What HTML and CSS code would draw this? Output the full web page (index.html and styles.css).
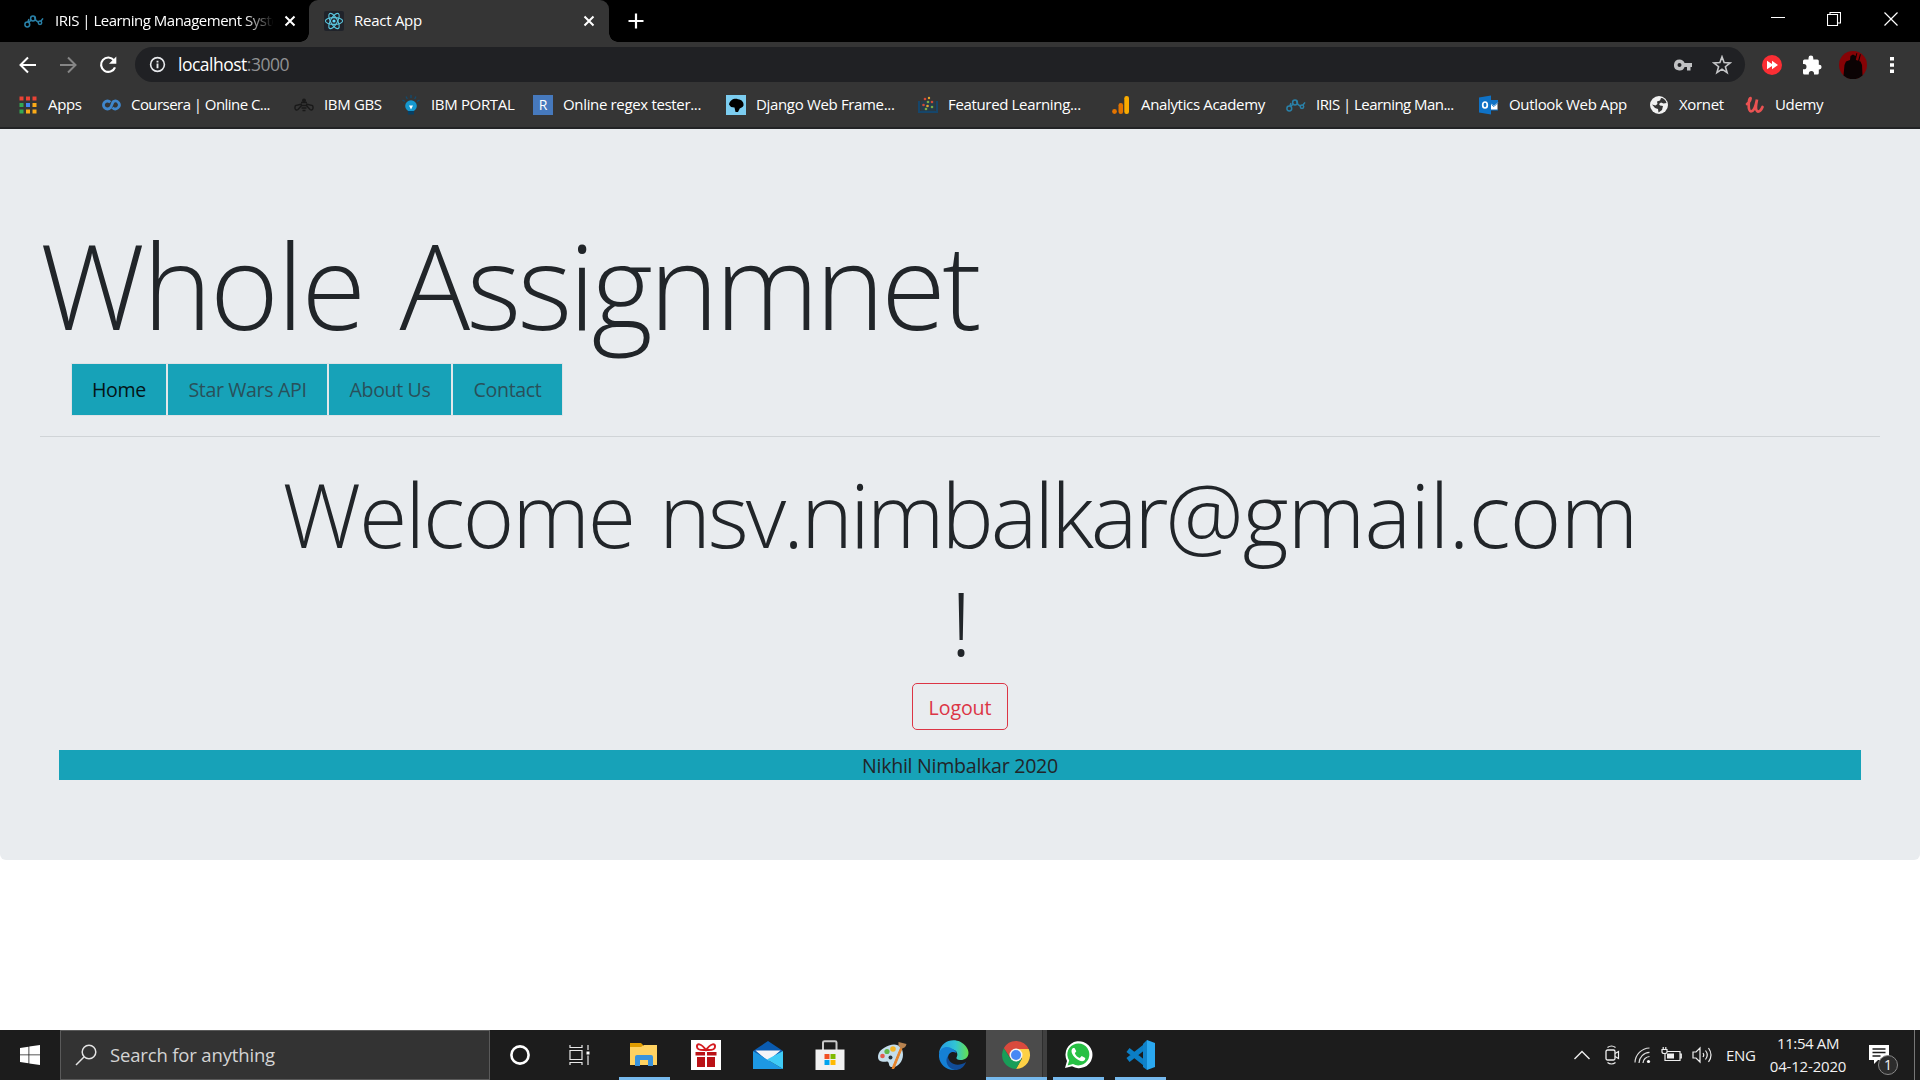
FILE: index.html
```html
<!DOCTYPE html>
<html lang="en">
<head>
<meta charset="utf-8">
<title>React App</title>
<link rel="stylesheet" href="styles.css">
</head>
<body>
<svg class="defs" width="0" height="0">
  <symbol id="iris" viewBox="0 0 20 20"><g fill="none" stroke="#2a81a8" stroke-width="1.5"><circle cx="3.3" cy="13.5" r="2.4"/><circle cx="9" cy="7.5" r="2.4"/><circle cx="16" cy="11.8" r="1.7"/><path d="M4.3 11.3 7.4 9.2M11 8.8l3.4 2.4M16.8 10.2l2.2-2.8M3.8 11l1.2-3M10.4 6l1.8 4"/></g></symbol>
  <symbol id="close" viewBox="0 0 12 12"><path d="M1.5 1.5l9 9m0-9l-9 9" fill="none" stroke="#fff" stroke-width="2"/></symbol>
</svg>

<header class="browser">
  <div class="tabstrip">
    <div class="tab tab-idle">
      <svg class="favicon" viewBox="0 0 20 20"><use href="#iris"/></svg>
      <span class="tab-title">IRIS | Learning Management Syste</span>
      <svg class="tab-close"><use href="#close"/></svg>
    </div>
    <div class="tab tab-active">
      <svg class="favicon" viewBox="0 0 20 20"><rect width="20" height="20" rx="2" fill="#20232a"/><g fill="none" stroke="#5bc6de" stroke-width="1.1"><ellipse cx="10" cy="10" rx="8.6" ry="3.4"/><ellipse cx="10" cy="10" rx="8.6" ry="3.4" transform="rotate(60 10 10)"/><ellipse cx="10" cy="10" rx="8.6" ry="3.4" transform="rotate(120 10 10)"/></g><circle cx="10" cy="10" r="1.6" fill="#61dafb"/></svg>
      <span class="tab-title">React App</span>
      <svg class="tab-close"><use href="#close"/></svg>
    </div>
    <svg class="new-tab" viewBox="0 0 16 16"><path d="M8 .5v15M.5 8h15" stroke="#fff" stroke-width="2.2"/></svg>
    <div class="window-controls">
      <svg viewBox="0 0 14 14"><path d="M0 5.500h14" stroke="#fff"/></svg>
      <svg viewBox="0 0 14 14"><path d="M.5 2.500h10v11H.5zM3 2.500V.5h10.500v10.500H11" fill="none" stroke="#fff" stroke-width="1.1"/></svg>
      <svg viewBox="0 0 14 14"><path d="M.5.5l13 13m0-13l-13 13" stroke="#fff" stroke-width="1.2"/></svg>
    </div>
  </div>

  <div class="toolbar">
    <svg class="nav-icon" viewBox="0 0 20 20"><path d="M18 10H3M10 2.500 2.500 10l7.500 7.500" fill="none" stroke="#fff" stroke-width="2"/></svg>
    <svg class="nav-icon" viewBox="0 0 20 20"><path d="M2 10h15M10 2.500l7.500 7.500-7.500 7.500" fill="none" stroke="#868686" stroke-width="2"/></svg>
    <svg class="nav-icon" viewBox="0 0 20 20"><path d="M16 5.300A7.200 7.200 0 1 0 17 12.300" fill="none" stroke="#fff" stroke-width="2.200"/><path d="M18.300 1.500v7.300H11z" fill="#fff"/></svg>
    <div class="address">
      <svg class="info" viewBox="0 0 18 18"><circle cx="9" cy="9" r="7.300" fill="none" stroke="#e8eaed" stroke-width="1.700"/><path d="M8 8h2v5H8zM8 5h2v2H8z" fill="#e8eaed"/></svg>
      <span class="url">localhost<span class="port">:3000</span></span>
      <svg class="key" viewBox="0 0 18 12"><path fill-rule="evenodd" fill="#c0c1c3" d="M5.500.500a5.500 5.500 0 1 0 5.100 7.500H13v3.500h3.500V8H18V4H10.600A5.500 5.500 0 0 0 5.500.500zm0 3.500a2 2 0 1 1 0 4 2 2 0 0 1 0-4z"/></svg>
      <svg class="star" viewBox="0 0 20 20"><path d="M10 1.800l2.100 5.800 6 .300-4.700 3.800 1.700 5.900-5.100-3.400-5.100 3.400 1.700-5.900L1.900 7.900l6-.300z" fill="none" stroke="#c6c7c9" stroke-width="1.600"/></svg>
    </div>
    <svg class="ext" viewBox="0 0 20 20"><circle cx="10" cy="10" r="10" fill="#fb2e34"/><path d="M5 5.800 10 9V5.800L16 10l-6 4.200V11l-5 3.200z" fill="#fff"/></svg>
    <svg class="ext" viewBox="0 0 20 20"><path fill="#fff" d="M1 6a1.500 1.500 0 0 1 1.500-1.500H6.500V3a2.400 2.400 0 0 1 4.800 0v1.500h4A1.500 1.500 0 0 1 16.800 6v3.700h.400a2.400 2.400 0 0 1 0 4.800h-.400v3.500a1.500 1.500 0 0 1-1.500 1.500H12v-.900a2.600 2.600 0 0 0-5.200 0v.900H2.500A1.500 1.500 0 0 1 1 18v-3.700h.900a2.600 2.600 0 0 0 0-5.200H1z"/></svg>
    <svg class="avatar" viewBox="0 0 28 28"><circle cx="14" cy="14" r="14" fill="#860306"/><path d="M4.500 24.500 5.500 14 7 10.500 11 9l.500-4L14 3.500 16.500 5l.500 4 4.500 1.500L23 14l.500 10.500A14 14 0 0 1 4.500 24.500zM16 7l1.500-5 .800.300L17 8zM19 10l2-7 .800.400L20 11z" fill="#0b0304"/></svg>
    <svg class="dots" viewBox="0 0 4 18"><path d="M0 1h4v3.500H0zM0 7.200h4v3.500H0zM0 13.400h4v3.500H0z" fill="#fff"/></svg>
  </div>

  <nav class="bookmarks">
    <span class="bm"><svg viewBox="0 0 20 20"><path fill="#ea4335" d="M1.500 1.500h4v4h-4zM8 1.500h4v4H8zM14.500 1.500h4v4h-4z"/><path fill="#34a853" d="M1.500 8h4v4h-4zM1.500 14.500h4v4h-4z"/><path fill="#4285f4" d="M8 8h4v4H8z"/><path fill="#fbab18" d="M14.500 8h4v4h-4zM8 14.500h4v4H8zM14.500 14.500h4v4h-4z"/></svg><span>Apps</span></span>
    <span class="bm bm-tight"><svg viewBox="0 0 20 20"><path d="M9.300 7.200A4 4 0 1 0 9.300 12.800C11 11.500 11 7.500 12.500 6.500A3.900 3.900 0 1 1 11.500 12.600" fill="none" stroke="#3f86cc" stroke-width="2.800"/></svg><span>Coursera | Online C...</span></span>
    <span class="bm"><svg viewBox="0 0 20 20"><g fill="none" stroke="#191919" stroke-width="1.400"><path d="M8 9 1.500 10.500C0 14 2 16 4 14.500L8 10M12 9l6.500 1.500c1.500 3.500-.500 5.500-2.500 4L12 10"/><path d="M7 7.500h6M7.500 10.500h5M7.500 13h5M8.500 15.500h3" stroke-width="1.700"/></g><circle cx="10" cy="5.500" r="2" fill="#191919"/></svg><span>IBM GBS</span></span>
    <span class="bm"><svg viewBox="0 0 20 20"><circle cx="10" cy="11" r="5.800" fill="#1598cf"/><path d="M7 16h6v3.500H7z" fill="#083f63"/><path d="M8 10.500h4l-2 4z" fill="#fff"/><path d="M10 0v3M5 1.500l1.300 2.500M15 1.500l-1.300 2.500M1.500 5l2.500 1.500M18.500 5 16 6.500" stroke="#114c70" stroke-width="1.300"/></svg><span>IBM PORTAL</span></span>
    <span class="bm"><svg viewBox="0 0 20 20"><path fill="#4679bd" d="M0 0h20v20H0z"/><text x="10" y="15.200" text-anchor="middle" class="glyph">R</text></svg><span>Online regex tester...</span></span>
    <span class="bm"><svg viewBox="0 0 20 20"><path fill="#7ccdf0" d="M0 0h20v20H0z"/><path d="M3 9.500C4 5 8 3 12 4.200c4 .300 6 3.300 5.500 6.300-1 2.500-3.500 2-4 3.500L12 17H9.500L8.500 12.500 5 12z"/></svg><span>Django Web Frame...</span></span>
    <span class="bm"><svg viewBox="0 0 20 20"><path d="M1 6v11h18V6" fill="none" stroke="#16466b" stroke-width="2.200"/><path fill="#263b49" d="M3 6h14v10H3z"/><g fill="#d24a35"><circle cx="7" cy="4" r="1.300"/><circle cx="5.500" cy="10" r="1.300"/><circle cx="14" cy="7" r="1.300"/></g><g fill="#78ab48"><circle cx="10" cy="7" r="1.300"/><circle cx="14" cy="12" r="1.300"/><circle cx="8" cy="14" r="1.300"/></g><g fill="#e5a22c"><circle cx="11" cy="3" r="1.200"/><circle cx="9.500" cy="11" r="1.300"/></g></svg><span>Featured Learning...</span></span>
    <span class="bm"><svg viewBox="0 0 20 20"><circle cx="3.500" cy="16.500" r="2.400" fill="#e37400"/><rect x="7.500" y="8" width="4.600" height="11" rx="2.200" fill="#e37400"/><rect x="13.300" y="1" width="4.700" height="18" rx="2.200" fill="#f9ab00"/></svg><span>Analytics Academy</span></span>
    <span class="bm bm-tight"><svg viewBox="0 0 20 20"><use href="#iris"/></svg><span>IRIS | Learning Man...</span></span>
    <span class="bm"><svg viewBox="0 0 20 20"><path fill="#fff" d="M11 5h7.500v10H11z"/><path fill="#0f72c6" d="M0 2.500 12 .500v19L0 17.500zM11 5h8v2l-4 3.500L11 8zM11 14.500h8v1h-8z"/><ellipse cx="6" cy="10" rx="2.300" ry="3" fill="none" stroke="#fff" stroke-width="1.700"/><path d="M12.500 9.500l2.500 2 4-4" fill="none" stroke="#0f72c6"/></svg><span>Outlook Web App</span></span>
    <span class="bm"><svg viewBox="0 0 20 20"><circle cx="10" cy="10" r="9" fill="#f1f1f1"/><path fill="#353535" d="M12 3c2.500 0 5 2 5.500 5l-3 .500-2.500-1-2 1.500 1 1.500 3 .500-1 4-3.500 2.500-.500-3.500L6 13 3 9.500l3.500 1L8.500 9 8 6.500l3-1z"/></svg><span>Xornet</span></span>
    <span class="bm"><svg viewBox="0 0 20 20"><path d="M2 9C5 7 6 3.500 5.500 3 3.500 3 2.500 16 6 16.500c3 0 5-7 6-12-1 5-2 11 .500 12 2 .300 4-2 5-4.500" fill="none" stroke="#ea5252" stroke-width="2.700" stroke-linecap="round"/></svg><span>Udemy</span></span>
  </nav>
</header>

<main class="page">
  <section class="jumbotron">
    <h1 class="title">Whole <span class="title-end">Assignmnet</span></h1>
    <nav class="menu">
      <a class="menu-item current">Home</a>
      <a class="menu-item">Star Wars API</a>
      <a class="menu-item">About Us</a>
      <a class="menu-item">Contact</a>
    </nav>
    <hr class="rule">
    <h2 class="welcome">Welcome <span class="mail-user">nsv.nimbalkar</span><span class="mail-host">@gmail.com</span><br>!</h2>
    <button class="logout">Logout</button>
    <footer class="credit">Nikhil Nimbalkar 2020</footer>
  </section>
</main>

<footer class="taskbar">
  <div class="start"><svg width="20" height="20" viewBox="0 0 20 20"><path fill="#fff" d="M0 3l8.500-1.300v7.800H0zM9.300 1.500 20 0v9.500H9.300zM0 10.300h8.500v7.900L0 17zM9.300 10.300H20V20L9.300 18.400z"/></svg></div>
  <div class="search"><svg width="22" height="22" viewBox="0 0 22 22"><circle cx="14" cy="8" r="6.800" fill="none" stroke="#e4e4e4" stroke-width="1.500"/><path d="M9.200 12.800 1 21" stroke="#e4e4e4" stroke-width="1.500"/></svg><span>Search for anything</span></div>
  <div class="slot cortana"><svg width="20" height="20" viewBox="0 0 20 20"><circle cx="10" cy="10" r="8.600" fill="none" stroke="#fff" stroke-width="2.600"/></svg></div>
  <div class="slot taskview"><svg width="22" height="20" viewBox="0 0 22 20"><path d="M1 5.500h12v9H1zM1 0v2.500h12V0M1 20v-2.500h12V20M19 0v5M19 10.500V20" fill="none" stroke="#e8e8e8" stroke-width="1.200"/><path fill="#fff" d="M17.500 6.500h3v3h-3z"/></svg></div>
  <div class="apps">
    <div class="app open"><svg viewBox="0 0 30 30"><path d="M1 3h11l2 2v5H1z" fill="#df9c00"/><path d="M1 7h11l3-2h13v20H1z" fill="#ffd261"/><path d="M6 26V17a2 2 0 0 1 2-2h14a2 2 0 0 1 2 2v9h-5v-6h-8v6z" fill="#3a93dc"/></svg></div>
    <div class="app"><svg viewBox="0 0 30 30"><path fill="#fff" d="M0 0h30v30H0z"/><path fill="#ba1116" d="M4.500 12H14v3.500H4.500zM16 12h9.500v3.500H16zM6 17h8v10H6zM16 17h8v10h-8z"/><path d="M15 10C10 3 5.500 3 6 7s7 3 9 3 8.500 1 9-3-4-4-9 3z" fill="none" stroke="#d41b20" stroke-width="2"/></svg></div>
    <div class="app"><svg viewBox="0 0 30 30"><path fill="#0a5bb0" d="M0 11 15 1l15 10-15 11z"/><path fill="#f5f5f8" d="M2.500 10.500h25L15 21z"/><path fill="#1d98e3" d="M0 11l30 18H0z"/><path fill="#3fcbf6" d="M30 11v18L14 19.500z"/></svg></div>
    <div class="app"><svg viewBox="0 0 30 30"><path d="M8 10V2.500Q8 1.200 9.500 1.200h10.500Q21.500 1.200 21.500 2.500V10" fill="none" stroke="#c9c9c9" stroke-width="2"/><path fill="#f1f1f1" d="M.500 9.500h29V30H.500z"/><path fill="#f25022" d="M9.500 14h5v5h-5z"/><path fill="#7fba00" d="M15.500 14h5v5h-5z"/><path fill="#00a4ef" d="M9.500 20h5v5h-5z"/><path fill="#ffb900" d="M15.500 20h5v5h-5z"/></svg></div>
    <div class="app"><svg viewBox="0 0 30 30"><path fill="#c4ddeb" d="M12 5.500c8-3 14 1 14 9S20 28 14 27c-3-1-1-5-4-5.500C6 22 1 22 1 17S5 8 12 5.500z"/><circle cx="5.500" cy="16" r="2.300" fill="#e35b4e"/><circle cx="10" cy="11.500" r="2.600" fill="#61b848"/><circle cx="16" cy="9" r="2.800" fill="#f4b527"/><circle cx="13.500" cy="17.500" r="2" fill="#26343e"/><path d="M15 28.500 23.500 8l1.500.500-8 20z" fill="#e5832a" stroke="#e5832a"/><path fill="#b78350" d="M21.500 2l8 2c-.500 3-3 4.500-5.500 4.500L21.500 6z"/></svg></div>
    <div class="app"><svg viewBox="0 0 30 30"><defs><linearGradient id="e1" x1="0" x2="1"><stop stop-color="#279be5"/><stop offset=".55" stop-color="#31c4d5"/><stop offset="1" stop-color="#65e04c"/></linearGradient></defs><path fill="url(#e1)" d="M0 13C2-1 19-4 27 6.500c6 8 0 14-6 13.500-4-.300-4-2-3-3.500 2-6-5-11-18-3.500z"/><path fill="#1580d5" d="M0 14c1-6 7-8.500 12-6 3 1.500 5 3 5.500 5-6-3-10 2-8 8 1.500 5 5 8 9 8.500C8 32-1 24 0 14z"/><path fill="#114c98" d="M9 16c0 8 10 11.500 18 6-2 5.500-6 8-11 8-7-1-11-9-7-14z"/></svg></div>
    <div class="app open focused"><svg viewBox="0 0 30 30"><path fill="#fdd045" d="M15 9h12.700A14 14 0 0 1 15 29l6-10.500z"/><path fill="#199d58" d="M2.900 8A14 14 0 0 0 15 29l5.500-10L9.500 19z"/><path fill="#d94a3d" d="M2.900 8A14 14 0 0 1 27.700 9H15l-5.500 9z"/><circle cx="15" cy="15" r="6.500" fill="#f4f4f4"/><circle cx="15" cy="15" r="5" fill="#4688f4"/></svg></div>
    <div class="app open"><svg viewBox="0 0 30 30"><path fill="#fff" d="M2 28l2-7A13.500 13.500 0 1 1 9 26.300z"/><path fill="#27c044" d="M4.600 25.500l1.600-5A11 11 0 1 1 10 24z"/><path d="M10 8c-3 2-1 7 2.500 10s8 4.500 9.500 1.500l.300-1.500-3.600-2-1.900 2c-2.300-.800-4.200-2.700-5-4.800l1.500-1.900L11.500 8z" fill="#fff"/></svg></div>
    <div class="app open"><svg viewBox="0 0 30 30"><path d="M22 5 3 20M3 10l19 15" fill="none" stroke="#0b7ec5" stroke-width="5"/><path fill="#0f83cb" d="M22 0v30l-4-3V4z"/><path fill="#2aa8f0" d="M22 0l8 3v24l-8 3z"/></svg></div>
  </div>
  <div class="tray">
    <svg width="16" height="10" viewBox="0 0 16 10"><path d="M.500 9 8 1.500 15.500 9" fill="none" stroke="#eee" stroke-width="1.400"/></svg>
    <svg width="16" height="20" viewBox="0 0 16 20"><rect x="1" y="5" width="9" height="10" rx="1.500" fill="none" stroke="#eee" stroke-width="1.300"/><path d="M10 8.500l3.500-2v7l-3.500-2M2.500 2.500q4-3 8 0M2.500 17.500q4 3 8 0" fill="none" stroke="#eee" stroke-width="1.200"/></svg>
    <svg width="17" height="17" viewBox="0 0 17 17"><g fill="none" stroke="#ddd" stroke-width="1.200"><path d="M1 15.500A15 15 0 0 1 15.500 1"/><path d="M5 16A11 11 0 0 1 15.500 5.300"/><path d="M9 16a7 7 0 0 1 6.500-6.500"/></g><circle cx="14.500" cy="14.500" r="1.600" fill="#fff"/></svg>
    <svg width="21" height="16" viewBox="0 0 21 16"><path d="M6.500 4.500H19v9H4V7M19 7h1.300v4H19M1 2.500h5v2.500q0 1.500-2.500 1.500T1 5zM2.200 0v2.500M4.800 0v2.500" fill="none" stroke="#eee" stroke-width="1.200"/><path fill="#eee" d="M6 6.500h7v5H6z"/></svg>
    <svg width="21" height="18" viewBox="0 0 21 18"><path d="M1 6h3l4-4v14l-4-4H1zM11 7q1.500 2 0 4M13.500 4.500q3.500 4.500 0 9M16.500 2q5 7 0 14" fill="none" stroke="#eee" stroke-width="1.200"/></svg>
    <span class="lang">ENG</span>
    <div class="clock"><span class="time">11:54 AM</span><span class="date">04-12-2020</span></div>
    <div class="notify"><svg width="20" height="19" viewBox="0 0 20 19"><path fill="#fff" d="M0 0h20v15H9l-4 4v-4H0z"/><path d="M3.500 4h13M3.500 7.500h13M3.500 11h8" stroke="#1c1c1c" stroke-width="1.300"/></svg><span class="badge">1</span></div>
  </div>
</footer>
</body>
</html>
```
FILE: styles.css
```css
* { box-sizing: border-box; }

body {
  margin: 0;
  width: 1920px;
  height: 1080px;
  overflow: hidden;
  display: flex;
  flex-direction: column;
  background: #fff;
  color: #212529;
  font-family: "Open Sans", "Noto Sans", sans-serif;
  font-size: 20px;
}

svg { display: block; flex: none; }
.defs { position: absolute; }

/* browser chrome */
.browser {
  height: 129px;
  flex: none;
  background: #353535;
  border-bottom: 2px solid #222325;
  color: #fff;
  font-size: 15px;
}

.tabstrip {
  height: 42px;
  display: flex;
  background: #000;
}

.tab {
  height: 42px;
  display: flex;
  align-items: center;
  white-space: nowrap;
}
.tab-idle { width: 309px; padding-left: 24px; }
.tab-active {
  position: relative;
  width: 300px;
  padding-left: 15px;
  background: #353535;
  border-radius: 9px 9px 0 0;
}
.tab-active::before,
.tab-active::after {
  content: "";
  position: absolute;
  bottom: 0;
  width: 9px;
  height: 9px;
}
.tab-active::before {
  left: -9px;
  background: radial-gradient(circle at 0 0, transparent 8.500px, #353535 9px);
}
.tab-active::after {
  right: -9px;
  background: radial-gradient(circle at 100% 0, transparent 8.500px, #353535 9px);
}
.favicon { width: 20px; height: 20px; }
.tab-title {
  flex: none;
  width: 219px;
  margin-left: 10px;
  padding-bottom: 2px;
  line-height: 24px;
  letter-spacing: -0.26px;
}
.tab-idle .tab-title {
  padding-left: 1px;
  letter-spacing: -0.5px;
  -webkit-mask-image: linear-gradient(90deg, #000 190px, transparent 220px);
  mask-image: linear-gradient(90deg, #000 190px, transparent 220px);
}
.tab-close { width: 12px; height: 12px; margin-left: 11px; }
.tab-active .tab-close { margin-left: 9px; }
.tab-active .tab-title { width: 220px; }
.new-tab { width: 16px; height: 16px; margin: 13px 0 0 19px; }
.window-controls {
  display: flex;
  gap: 42px;
  margin: 12px 22px 0 auto;
}
.window-controls svg { width: 14px; height: 14px; }
.window-controls svg:nth-child(-n+2) { margin: 0 1px 0 -1px; }

.toolbar {
  height: 45px;
  display: flex;
  align-items: center;
  padding-left: 18px;
}
.nav-icon { width: 20px; height: 20px; margin-right: 20px; }
.address {
  width: 1610px;
  height: 35px;
  margin-left: -3px;
  padding: 0 13px 0 14px;
  display: flex;
  align-items: center;
  border-radius: 18px;
  background: #202124;
}
.info { width: 17px; height: 17px; }
.url {
  margin-left: 12px;
  padding-bottom: 1px;
  font-size: 17.500px;
  letter-spacing: -0.5px;
  color: #fff;
}
.port { color: #909193; }
.key { width: 18px; height: 12px; margin-left: auto; }
.star { width: 20px; height: 20px; margin-left: 20px; }
.ext { width: 20px; height: 20px; margin-left: 17px; }
.ext + .ext { margin-left: 20px; }
.avatar { width: 28px; height: 28px; margin-left: 17px; }
.dots { width: 4px; height: 20px; margin-left: 23px; }

.bookmarks {
  height: 36px;
  padding-left: 18px;
  display: grid;
  grid-template-columns: 83px 193px 107px 132px 193px 192px 193px 175px 193px 170px 96px 100px;
  align-items: center;
}
.bm {
  display: flex;
  align-items: center;
  gap: 10px;
  white-space: nowrap;
  letter-spacing: -0.34px;
}
.bm span { padding-bottom: 2px; }
.bm-tight { letter-spacing: -0.55px; }
.bm svg { width: 20px; height: 20px; }
.glyph { fill: #fff; font-size: 14px; }

/* page */
.page { flex: 1; }
.jumbotron {
  height: 731px;
  padding: 80px 40px;
  border-radius: 0 0 6px 6px;
  background: #e9ecef;
}
.title {
  height: 144px;
  margin: 0 0 10px;
  font-size: 117.600px;
  font-weight: 300;
  line-height: 151px;
  letter-spacing: -2.100px;
  word-spacing: 7px;
  white-space: nowrap;
}
.title-end { letter-spacing: -3.600px; }
.menu {
  width: 492px;
  margin: 0 0 20px 31px;
  display: grid;
  grid-template-columns: 94px 161px 124px 111px;
  border: 1px solid #dee2e6;
}
.menu-item {
  height: 51px;
  padding-top: 11px;
  line-height: 30px;
  text-align: center;
  font-size: 19.600px;
  letter-spacing: -0.350px;
  color: #29505a;
  background: #17a2b8;
}
.menu-item + .menu-item { border-left: 2px solid #e3e7ea; }
.current { color: #051417; }
.rule {
  height: 1px;
  margin: 0 0 20px;
  border: 0;
  background: #d0d4d7;
}
.welcome {
  margin: 0 0 7px;
  padding-top: 3px;
  font-size: 88px;
  font-weight: 300;
  line-height: 108px;
  letter-spacing: -2.100px;
  word-spacing: 4px;
  text-align: center;
}
.mail-user { letter-spacing: -3.050px; }
.mail-host { letter-spacing: -0.800px; }
.logout {
  display: block;
  width: 96px;
  height: 47px;
  margin: 0 auto 20px;
  padding: 2px 0 0;
  border: 1px solid #dc3545;
  border-radius: 5px;
  background: transparent;
  color: #dc3545;
  font: 19.600px/30px "Open Sans", "Noto Sans", sans-serif;
  letter-spacing: -0.100px;
}
.credit {
  height: 30px;
  margin: 0 19px;
  line-height: 31px;
  font-size: 19.600px;
  letter-spacing: -0.280px;
  text-align: center;
  background: #17a2b8;
}

/* taskbar */
.taskbar {
  height: 50px;
  flex: none;
  display: flex;
  background: #1c1c1c;
  color: #f2f2f2;
}
.start { width: 60px; padding: 15px 0 0 20px; }
.search {
  width: 430px;
  padding-left: 14px;
  display: flex;
  align-items: center;
  gap: 13px;
  border: 1px solid #5a5a5a;
  background: #333;
  color: #d4d4d4;
  font-size: 18.500px;
  letter-spacing: -0.160px;
}
.search span { padding-bottom: 2px; }
.slot {
  width: 60px;
  display: flex;
  align-items: center;
  justify-content: center;
}
.taskview { padding-right: 1px; }
.apps { display: flex; margin-left: 3px; }
.app {
  width: 62px;
  height: 50px;
  padding: 10px 16px;
}
.app svg { width: 30px; height: 30px; }
.open {
  background: linear-gradient(#76b9ed, #76b9ed) 50% 100% / 51px 3px no-repeat;
}
.focused {
  background:
    linear-gradient(#76b9ed, #76b9ed) 1px 100% / 61px 3px no-repeat,
    linear-gradient(90deg, transparent 1px, #4b4b4b 1px 57px, #2e2e2e 57px 58px, #404040 58px);
}
.tray {
  flex: 1;
  display: flex;
  align-items: center;
  margin-left: 403px;
  border-right: 1px solid #777;
  margin-right: 5px;
}
.tray > svg { margin-right: 13px; }
.tray > svg:first-child { margin-right: 15px; }
.tray > svg:nth-child(3) { margin-right: 10px; }
.tray > svg:nth-child(4) { margin-right: 10px; }
.lang { width: 30px; font-size: 15px; letter-spacing: -0.3px; }
.clock {
  width: 80px;
  margin-left: 12px;
  display: flex;
  flex-direction: column;
  text-align: center;
  font-size: 15px;
  line-height: 23px;
}
.time { letter-spacing: -0.380px; }
.date { letter-spacing: -0.190px; }
.notify {
  position: relative;
  width: 32px;
  height: 50px;
  margin-left: 21px;
  padding-top: 15px;
}
.badge {
  position: absolute;
  left: 9px;
  top: 25px;
  width: 20px;
  height: 20px;
  border: 1px solid #888;
  border-radius: 50%;
  background: #2c2c2c;
  font-size: 14px;
  line-height: 18px;
  text-align: center;
}
```
